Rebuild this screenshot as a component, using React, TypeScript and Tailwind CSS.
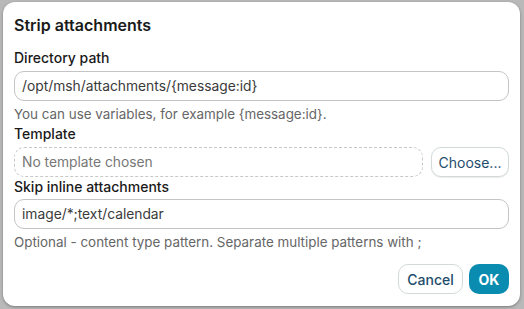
export default function App() {
  return (
    <div className="w-[524px] h-[309px] bg-[#b9b9b9] pt-[2px] pl-[3px]" style={{ fontFamily: 'Inter, "Noto Sans", sans-serif' }}>
      <div className="w-[517px] h-[304px] bg-white rounded-[12px] shadow-[0_1px_3px_rgba(0,0,0,0.35)] px-[11px] pt-[13px] flex flex-col">
        <h2 className="text-[16px] leading-[20px] font-semibold text-[#1a1a1a]">Strip attachments</h2>

        <label className="mt-[14px] text-[14px] leading-[18px] font-medium text-[#1a1a1a]">Directory path</label>
        <div className="mt-[4px] h-[30px] border border-[#c4c4c4] rounded-[10px] flex items-center px-[7px] text-[13.8px] text-[#3a3a3a]">
          /opt/msh/attachments/{"{message:id}"}
        </div>
        <p className="mt-[5px] text-[13.4px] leading-[16px] text-[#666]">You can use variables, for example {"{message:id}"}.</p>

        <label className="mt-[3px] text-[14px] leading-[18px] font-medium text-[#1a1a1a]">Template</label>
        <div className="mt-[4px] flex gap-[8px]">
          <div className="flex-1 h-[30px] border border-dashed border-[#c8c8c8] rounded-[10px] flex items-center px-[7px] text-[13.8px] text-[#777]">
            No template chosen
          </div>
          <button className="w-[78px] h-[30px] border border-[#d4dadc] rounded-[10px] text-[14px] text-[#1e4d6b] bg-white shadow-[0_1px_1px_rgba(0,0,0,0.08)]">
            Choose...
          </button>
        </div>

        <label className="mt-[1px] text-[14px] leading-[18px] font-medium text-[#1a1a1a]">Skip inline attachments</label>
        <div className="mt-[3px] h-[30px] border border-[#c4c4c4] rounded-[10px] flex items-center px-[7px] text-[13.8px] text-[#3a3a3a]">
          image/*;text/calendar
        </div>
        <p className="mt-[5px] text-[13.4px] leading-[16px] text-[#666]">Optional - content type pattern. Separate multiple patterns with ;</p>

        <div className="mt-[14px] flex justify-end gap-[6px]">
          <button className="w-[65px] h-[30px] border border-[#d4dadc] rounded-[10px] text-[14px] font-medium text-[#1e4d6b] bg-white">
            Cancel
          </button>
          <button className="w-[40px] h-[30px] rounded-[10px] text-[14px] font-bold text-white bg-[#0a8bb0]">
            OK
          </button>
        </div>
      </div>
    </div>
  );
}
